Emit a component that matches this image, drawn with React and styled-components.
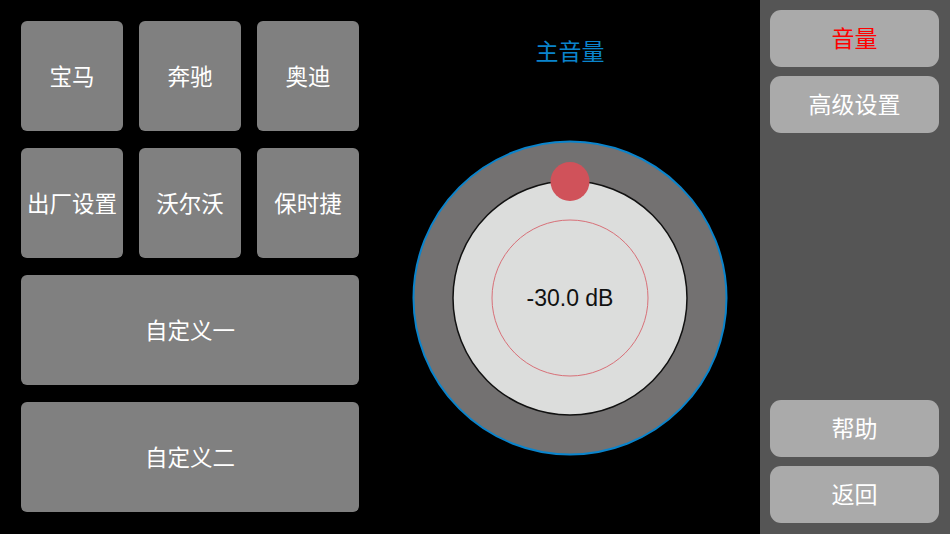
import React from "react";
import styled, { createGlobalStyle } from "styled-components";

const Global = createGlobalStyle`
  html, body { margin: 0; padding: 0; background: #000; }
  body { font-family: "Noto Sans CJK SC", "Noto Sans", sans-serif; }
  #root { width: 950px; height: 534px; }
`;

const Page = styled.div`
  width: 950px;
  height: 534px;
  display: flex;
  background: #000;
  overflow: hidden;
`;

const Presets = styled.div`
  width: 380px;
  box-sizing: border-box;
  padding: 21px;
  display: grid;
  grid-template-columns: repeat(3, 102px);
  grid-auto-rows: 110px;
  column-gap: 16px;
  row-gap: 17px;
`;

const PresetButton = styled.button`
  grid-column: ${(p) => (p.$wide ? "1 / span 3" : "auto")};
  border: none;
  border-radius: 6px;
  background: #808080;
  color: #fff;
  font-family: "Noto Sans CJK SC", sans-serif;
  font-size: 22.5px;
  padding: 0 0 3px;
  display: flex;
  align-items: center;
  justify-content: center;
`;

const Center = styled.div`
  width: 380px;
  display: flex;
  flex-direction: column;
  align-items: center;
`;

const Title = styled.div`
  margin-top: 34px;
  height: 32px;
  line-height: 32px;
  color: #0a84cc;
  font-size: 23px;
  font-family: "Noto Sans CJK SC", sans-serif;
`;

const Knob = styled.svg`
  margin-top: 73px;
  display: block;
`;

const Sidebar = styled.div`
  width: 190px;
  background: #555555;
  box-sizing: border-box;
  padding: 10px 11px 11px 10px;
  display: flex;
  flex-direction: column;
  justify-content: space-between;
`;

const Group = styled.div`
  display: flex;
  flex-direction: column;
  gap: 9px;
`;

const SideButton = styled.button`
  height: 57px;
  border: none;
  border-radius: 11px;
  background: #aaaaaa;
  color: ${(p) => (p.$active ? "#ff0000" : "#fff")};
  font-family: "Noto Sans CJK SC", sans-serif;
  font-size: 23px;
  padding: 0 0 4px;
`;

export default function App() {
  const small = ["宝马", "奔驰", "奥迪", "出厂设置", "沃尔沃", "保时捷"];
  return (
    <>
      <Global />
      <Page>
        <Presets>
          {small.map((s) => (
            <PresetButton key={s}>{s}</PresetButton>
          ))}
          <PresetButton $wide>自定义一</PresetButton>
          <PresetButton $wide>自定义二</PresetButton>
        </Presets>
        <Center>
          <Title>主音量</Title>
          <Knob width="318" height="318" viewBox="0 0 318 318">
            <circle cx="159" cy="159" r="156.5" fill="#737171" stroke="#0a84cc" strokeWidth="2" />
            <circle cx="159" cy="159" r="117" fill="#dcdddc" stroke="#111" strokeWidth="1.5" />
            <circle cx="159" cy="159" r="78" fill="none" stroke="#d87078" strokeWidth="1" />
            <circle cx="159" cy="42.5" r="19.5" fill="#d0525a" />
            <text
              x="159"
              y="167"
              textAnchor="middle"
              fontFamily="Liberation Sans, Arial, sans-serif"
              fontSize="23"
              fill="#111"
            >
              -30.0 dB
            </text>
          </Knob>
        </Center>
        <Sidebar>
          <Group>
            <SideButton $active>音量</SideButton>
            <SideButton>高级设置</SideButton>
          </Group>
          <Group>
            <SideButton>帮助</SideButton>
            <SideButton>返回</SideButton>
          </Group>
        </Sidebar>
      </Page>
    </>
  );
}
